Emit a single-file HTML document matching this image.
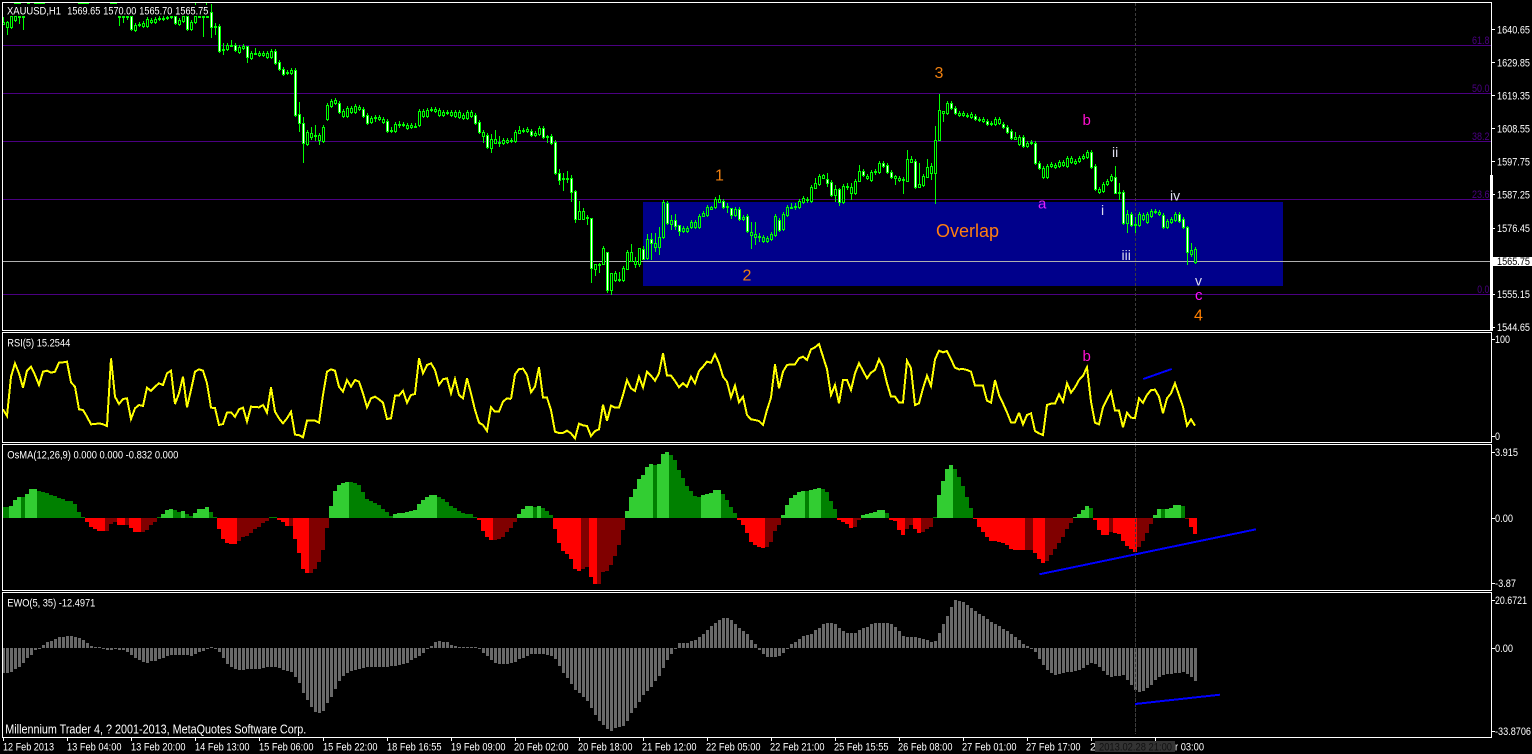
<!DOCTYPE html>
<html><head><meta charset="utf-8"><style>
html,body{margin:0;padding:0;background:#000;width:1532px;height:754px;overflow:hidden}
svg{display:block;position:absolute;left:0;top:0}
text{font-family:"Liberation Sans",sans-serif;font-size:11px;fill:#fff;white-space:pre}
.w{font-size:16px;fill:#f08010}
.m{font-size:15px;fill:#ff10d0}
.r{font-size:14px;fill:#dde}
.f{fill:#4b0082;font-size:11px}
</style></head><body>
<svg width="1532" height="754" viewBox="0 0 1532 754" xmlns="http://www.w3.org/2000/svg">
<rect width="1532" height="754" fill="#000"/>
<rect x="643" y="202" width="640" height="84" fill="#00008b"/>
<g fill="#4b0082">
<rect x="3" y="45" width="1488" height="1"/><rect x="3" y="93" width="1488" height="1"/><rect x="3" y="141" width="1488" height="1"/><rect x="3" y="199" width="1488" height="1"/><rect x="3" y="294" width="1488" height="1"/>
</g>
<rect x="3" y="261" width="1488" height="1" fill="#b0b0b0"/>
<path d="M1135.5 3V734" stroke="#3c3c3c" stroke-dasharray="3 2" fill="none"/>
<g id="c" shape-rendering="crispEdges"></g>
<rect x="5" y="3.500" width="204" height="12.500" fill="#000"/>
<g fill="#0f0"><rect x="14" y="3" width="7" height="1"/><rect x="27" y="3" width="3" height="1"/><rect x="34" y="3" width="11" height="1"/><rect x="78" y="3" width="11" height="1"/><rect x="110" y="3" width="7" height="1"/><rect x="195" y="3" width="1" height="2"/><rect x="206" y="3" width="1" height="2"/></g>
<g id="o" shape-rendering="crispEdges"></g>
<g id="e" shape-rendering="crispEdges" fill="#696969"></g>
<path d="M1135.5 444V734" stroke="#3c3c3c" stroke-dasharray="3 2" fill="none"/>

<g fill="none" stroke="#ff0" stroke-width="6" stroke-linejoin="miter" shape-rendering="crispEdges">
<polyline transform="translate(0,330) scale(.33333)" points="9,238 21,258 33,140 45,100 57,130 69,173 81,122 93,110 105,135 117,165 129,125 141,122 153,128 165,125 177,98 189,97 201,95 213,157 225,170 237,238 249,240 261,260 273,283 285,282 297,280 309,283 321,288 333,85 345,200 357,222 369,207 381,205 393,267 405,235 417,225 429,228 441,173 453,183 465,170 477,160 489,165 501,130 513,122 525,222 537,190 549,140 561,232 573,180 585,125 597,118 609,122 621,160 633,233 645,234 657,285 669,282 681,248 693,247 705,260 717,238 729,233 741,275 753,230 765,231 777,232 789,225 801,248 813,172 825,245 837,265 849,280 861,265 873,245 885,314 897,315 909,322 921,272 933,272 945,272 957,278 969,195 981,125 993,118 1005,122 1017,170 1029,185 1041,150 1053,170 1065,150 1077,155 1089,190 1101,232 1113,205 1125,200 1137,208 1149,218 1161,267 1173,265 1185,197 1197,197 1209,182 1221,218 1233,195 1245,192 1257,85 1269,130 1281,105 1293,100 1305,120 1317,165 1329,148 1341,145 1353,190 1365,147 1377,195 1389,205 1401,145 1413,190 1425,240 1437,278 1449,285 1461,303 1473,232 1485,245 1497,245 1509,215 1521,205 1533,207"/>
<polyline transform="translate(510,330) scale(.33333)" points="3,207 15,133 27,117 39,116 51,135 63,187 75,170 87,112 99,203 111,203 123,240 135,305 147,309 159,309 171,302 183,310 195,325 207,281 219,286 231,288 243,318 255,303 267,298 279,224 291,273 303,227 315,233 327,233 339,195 351,150 363,175 375,183 387,140 399,172 411,125 423,137 435,152 447,130 459,70 471,137 483,137 495,153 507,172 519,160 531,170 543,140 555,160 567,123 579,110 591,95 603,98 615,73 627,100 639,140 651,155 663,202 675,167 687,217 699,200 711,255 723,268 735,270 747,273 759,285 771,240 783,203 795,103 807,175 819,125 831,105 843,103 855,103 867,85 879,80 891,90 903,58 915,52 927,42 939,80 951,117 963,195 975,165 987,220 999,150 1011,150 1023,180 1035,130 1047,100 1059,122 1071,145 1083,128 1095,120 1107,88 1119,110 1131,160 1143,200 1155,200 1167,218 1179,218 1191,92 1203,115 1215,225 1227,220 1239,175 1251,137 1263,168 1275,88 1287,62 1299,67 1311,63 1323,88 1335,113 1347,118 1359,117 1371,120 1383,125 1395,167 1407,167 1419,167 1431,212 1443,218 1455,150 1467,195 1479,220 1491,247 1503,277 1515,277 1527,248"/>
<polyline transform="translate(1020,330) scale(.33333)" points="-3,248 9,283 21,255 33,250 45,303 57,310 69,315 81,225 93,221 105,221 117,193 129,215 141,160 153,188 165,172 177,150 189,137 201,112 213,215 225,278 237,283 249,232 261,208 273,185 285,242 297,242 309,292 321,248 333,263 345,264 357,205 369,218 381,195 393,180 405,179 417,200 429,250 441,205 453,190 465,160 477,195 489,230 501,287 513,268 525,287"/>
</g>
<g stroke="#00f" stroke-width="2" fill="none" shape-rendering="crispEdges">
<path d="M1143.300 379L1171.700 369"/><path d="M1039.300 574.300L1256 529.300"/><path d="M1135 704L1220 694.700"/>
</g>

<!-- panes -->
<g fill="none" stroke="#fff" shape-rendering="crispEdges">
<rect x="2.500" y="2.500" width="1489" height="328"/>
<rect x="2.500" y="332.500" width="1489" height="110"/>
<rect x="2.500" y="444.500" width="1489" height="146"/>
<rect x="2.500" y="592.500" width="1489" height="145"/>
</g>
<rect x="1490" y="175" width="3" height="156" fill="#fff"/>
<g fill="#fff">
<rect x="1492" y="29" width="3" height="1"/><rect x="1492" y="62" width="3" height="1"/><rect x="1492" y="95" width="3" height="1"/><rect x="1492" y="128" width="3" height="1"/><rect x="1492" y="161" width="3" height="1"/><rect x="1492" y="194" width="3" height="1"/><rect x="1492" y="228" width="3" height="1"/><rect x="1492" y="294" width="3" height="1"/><rect x="1492" y="327" width="3" height="1"/>
<rect x="1492" y="339" width="3" height="1"/><rect x="1492" y="436" width="3" height="1"/><rect x="1492" y="452" width="3" height="1"/><rect x="1492" y="518" width="3" height="1"/><rect x="1492" y="583" width="3" height="1"/><rect x="1492" y="600" width="3" height="1"/><rect x="1492" y="648" width="3" height="1"/><rect x="1492" y="731" width="3" height="1"/>
<rect x="3" y="738" width="1" height="3"/><rect x="67" y="738" width="1" height="3"/><rect x="131" y="738" width="1" height="3"/><rect x="195" y="738" width="1" height="3"/><rect x="259" y="738" width="1" height="3"/><rect x="323" y="738" width="1" height="3"/><rect x="387" y="738" width="1" height="3"/><rect x="451" y="738" width="1" height="3"/><rect x="515" y="738" width="1" height="3"/><rect x="579" y="738" width="1" height="3"/><rect x="643" y="738" width="1" height="3"/><rect x="707" y="738" width="1" height="3"/><rect x="771" y="738" width="1" height="3"/><rect x="835" y="738" width="1" height="3"/><rect x="899" y="738" width="1" height="3"/><rect x="963" y="738" width="1" height="3"/><rect x="1027" y="738" width="1" height="3"/><rect x="1091" y="738" width="1" height="3"/><rect x="1155" y="738" width="1" height="3"/>
</g>

<!-- fib labels -->
<text class="f" x="1472" y="44" textLength="17.500">61.8</text>
<text class="f" x="1472" y="92" textLength="17.500">50.0</text>
<text class="f" x="1472" y="140" textLength="17.500">38.2</text>
<text class="f" x="1472" y="198" textLength="17.500">23.6</text>
<text class="f" x="1477.300" y="293" textLength="12">0.0</text>

<!-- wave labels -->
<text class="w" x="715" y="180.500">1</text>
<text class="w" x="742.500" y="280.500">2</text>
<text class="w" x="934.500" y="78">3</text>
<text class="w" x="936" y="237" style="font-size:18px;fill:#ff7f10">Overlap</text>
<text class="w" x="1194" y="320.500" style="fill:#ff7f00">4</text>
<text class="m" x="1082.500" y="125">b</text>
<text class="m" x="1082.500" y="361">b</text>
<text class="m" x="1038" y="208.500" style="fill:#e020ff">a</text>
<text class="m" x="1195" y="300" style="fill:#ff10ff">c</text>
<text class="r" x="1112" y="157">ii</text>
<text class="r" x="1101" y="215">i</text>
<text class="r" x="1121.500" y="260">iii</text>
<text class="r" x="1170" y="200.500">iv</text>
<text class="r" x="1195" y="285.500">v</text>

<!-- left labels -->
<text x="7" y="14.500" textLength="54">XAUUSD,H1</text>
<text x="67.300" y="14.500" textLength="33">1569.65</text>
<text x="103.300" y="14.500" textLength="33">1570.00</text>
<text x="139.300" y="14.500" textLength="33">1565.70</text>
<text x="175.300" y="14.500" textLength="33">1565.75</text>
<text x="7.300" y="346.500" textLength="63">RSI(5) 15.2544</text>
<text x="7.300" y="458.500" textLength="171">OsMA(12,26,9) 0.000 0.000 -0.832 0.000</text>
<text x="7.300" y="606.500" textLength="88">EWO(5, 35) -12.4971</text>
<text x="5.300" y="733.500" textLength="301" style="font-size:12.500px">Millennium Trader 4, ? 2001-2013, MetaQuotes Software Corp.</text>

<!-- right axis -->
<g>
<text x="1497" y="33.500" textLength="33">1640.65</text>
<text x="1497" y="66.500" textLength="33">1629.85</text>
<text x="1497" y="99.500" textLength="33">1619.35</text>
<text x="1497" y="132.500" textLength="33">1608.55</text>
<text x="1497" y="165.500" textLength="33">1597.75</text>
<text x="1497" y="198.500" textLength="33">1587.25</text>
<text x="1497" y="232" textLength="33">1576.45</text>
<rect x="1492" y="257" width="40" height="9" fill="#fff"/>
<text x="1497" y="265" textLength="33" style="fill:#000">1565.75</text>
<text x="1497" y="298" textLength="33">1555.15</text>
<text x="1497" y="331" textLength="33">1544.65</text>
<text x="1495" y="343" textLength="15">100</text>
<text x="1495" y="440" textLength="5">0</text>
<text x="1495" y="456" textLength="23">3.915</text>
<text x="1495" y="522" textLength="18">0.00</text>
<text x="1495" y="587" textLength="21">-3.87</text>
<text x="1495" y="604" textLength="32">20.6721</text>
<text x="1495" y="652" textLength="18">0.00</text>
<text x="1495" y="735" textLength="36">-33.8706</text>
</g>

<!-- time axis -->
<g>
<text x="3" y="750.500" textLength="51">12 Feb 2013</text>
<text x="67" y="750.500" textLength="54.500">13 Feb 04:00</text>
<text x="131" y="750.500" textLength="54.500">13 Feb 20:00</text>
<text x="195" y="750.500" textLength="54.500">14 Feb 13:00</text>
<text x="259" y="750.500" textLength="54.500">15 Feb 06:00</text>
<text x="323" y="750.500" textLength="54.500">15 Feb 22:00</text>
<text x="387" y="750.500" textLength="54.500">18 Feb 16:55</text>
<text x="451" y="750.500" textLength="54.500">19 Feb 09:00</text>
<text x="514" y="750.500" textLength="54.500">20 Feb 02:00</text>
<text x="578" y="750.500" textLength="54.500">20 Feb 18:00</text>
<text x="642" y="750.500" textLength="54.500">21 Feb 12:00</text>
<text x="706" y="750.500" textLength="54.500">22 Feb 05:00</text>
<text x="770" y="750.500" textLength="54.500">22 Feb 21:00</text>
<text x="834" y="750.500" textLength="54.500">25 Feb 15:55</text>
<text x="898" y="750.500" textLength="54.500">26 Feb 08:00</text>
<text x="962" y="750.500" textLength="54.500">27 Feb 01:00</text>
<text x="1026" y="750.500" textLength="54.500">27 Feb 17:00</text>
<text x="1090" y="750.500">2</text>
<rect x="1095" y="741" width="80" height="11" fill="#333"/>
<text x="1099" y="750.500" textLength="73" style="fill:#111">2013.02.28 21:00</text>
<text x="1175" y="750.500" textLength="29">r 03:00</text>
</g>
</svg>
<script>
document.querySelectorAll('text[textLength]').forEach(function(t){t.setAttribute('lengthAdjust','spacingAndGlyphs')});
var C={0:"66,72,,50,75 65,80,,62,105 48,82 48,60 48,50,,48,72 48,50,,48,90",
29:"48,50,,48,78 48,50,,48,68 48,50,,48,60 48,88,w 76,90 72,76 70,77 58,78 60,66 58,65 55,58 54,57 50,55 48,50 48,70,w 60,72 48,62 48,86,w 66,88 48,66 48,50,,48,52 48,50,,48,110 48,50,,48,52 36,82,w,12,115 78,80,,70,105 78,152,w 148,151,,130,165 135,148 136,139,,120,141 136,150,w 142,156 139,143,,132,150 138,172,w,138,190 160,175 159,162,,145,166 159,165 160,165 160,172 152,170 154,188,w 186,208,w 208,222,w 217,220 210,218 210,344,w 343,370,w,306,395 370,428,w,350,488 396,432 400,410,,380,420 405,408,,375,422 405,420,,400,434 382,422 315,356 304,317 301,308 309,336,w 333,347 324,348 324,336 318,336 321,326 328,348,w 345,368,w 354,366 351,354,,345,365 351,358 357,365 363,392,w 389,392,,380,398 372,392 371,374,,362,385 371,374 375,383 376,380 378,381,,370,385 334,376 333,347 330,347 328,331 328,334 330,345 337,344 337,340 337,346 336,347 336,350 345,354 337,353 337,349 346,370,w 367,397,w 397,407,,390,428 406,442,w 418,443,,402,460 418,430,,390,432 426,429,,408,440 420,430 421,425",
127:"420,424 396,424 390,398,,378,400 389,392 388,392 394,405,w 400,404 384,402 385,410,w 408,411,,405,428 408,428,w 427,520,w 520,540,w,507,555 534,537,,520,572 534,537,,514,550 535,575,w,525,605 573,656,w,570,668 633,658,,603,660 633,656,,625,660 650,654,,645,674 655,805,w,655,850 793,806,,793,828 792,795,,790,818 745,793,,738,796 757,870,w,755,878 820,870,,820,884 820,840,,812,845 837,840,,815,846 805,840 757,806,,750,808 755,782,,732,784 782,792,,770,805 745,792,,745,802 747,777,w,738,780 718,775,,703,780 718,730,w,700,780 730,740,,700,755 710,742,,680,765 607,710 610,670,w 660,672,,645,690 660,678,w,642,690 676,694,w,676,708 683,692 683,692 666,682 666,680 648,680 640,648,,632,650 622,645 622,626,,618,628 596,622 596,605,,585,608 603,620,w 617,621,,610,640 625,645,w,625,658 628,646 628,656,w 650,657 648,692,w 695,706,,665,746 702,710,,667,735 708,711,,700,725 712,724 714,724 703,716 649,704 659,690,w 643,688 622,644 620,624,,610,628 618,622,,610,630 604,620 595,605 596,599,,590,610 562,602 550,564,,535,566 527,551 526,535,,522,538 538,550,w,520,560 546,585,w 568,584,,555,605 568,606,w,565,618 558,606 557,561,,550,570 560,578,,548,600 542,578 512,542,,495,544 512,526,w 528,533 517,540 514,517,,508,525 488,515 490,497,w 494,515,w 515,530,w 529,533,,525,555 533,540 537,540,,530,582 478,542,,450,544 478,485,,468,490 484,562,w 553,560,,490,562 528,555 500,530,,478,532 498,518,,490,540 420,518,,378,613 330,420,,282,422 332,340,,332,365 310,340 310,325,w 325,340,w 340,344 338,345 344,348 342,350 348,358,w 357,360 358,362 362,372,w 369,373 358,372 358,370 372,380,w 380,395,w 392,413,w 412,416,,395,420 410,432",
255:"410,437,w 430,437 427,430 430,490,w 490,505,w 505,530 497,530 492,497 495,502 487,497 487,496 475,497 475,487 483,488 475,482 468,475 457,470 455,500,w 497,566,w 566,575 552,572 543,553 528,540 532,578,w,498,580 575,578,,550,600 576,670,w 642,670,,630,700 642,675,w 673,676,,650,700 643,675 645,658 643,665 633,647 632,635 635,642 645,682,w 662,682 657,665 643,660 643,662,w 658,680,w 680,757,w,678,795 751,761,,730,772 747,785"};
var s='';
for(var k in C){C[k].split(' ').forEach(function(t,n){
var a=t.split(','),i=+k+n,x=3+4*i,T=+a[0],B=+a[1],w=a[2]=='w';
var h=a[3]?+a[3]:T-6,l=a[4]?+a[4]:B+6;
var yt=Math.round(T/3),yb=Math.round(B/3),yh=Math.round(h/3),yl=Math.round(l/3);
if(yb<=yt)yb=yt+1;
s+='<rect x="'+x+'" y="'+yh+'" width="1" height="'+Math.max(1,yl-yh)+'" fill="#0f0"/>';
s+='<rect x="'+(x-.5)+'" y="'+(yt+.5)+'" width="2" height="'+(yb-yt)+'" stroke="#0f0" fill="'+(w?'#fff':(yb-yt<2?'#0f0':'#00000000'))+'"/>';
if(!w&&yb-yt>=2){s+='<rect x="'+x+'" y="'+(yt+1)+'" width="1" height="'+(yb-yt-1)+'" fill="'+((i>=160&&yt>=202)?'#00008b':'#000')+'"/>';}
});}
document.getElementById('c').innerHTML=s;

var O={0:"532D 532D 528L 510L 502L 502D 492L 478L 478L 483D 486D 490D 494D 498D 503D 507D 512D 514D 522D 546D 560D 576R 592R 598R 603R 603R 603K 582K 576K 585R 585R 585K 594R 606R 606R 606K 600K 585K 576K 560D 552L 540L 537L 540D 545D 543L 552D 558D 548L 537L 537L 530L 546D 560D 597R 627R 639R 642R 642R 634K 621K 617K 610K 598K 590K 578K 572K 560D 561D 570R 576R 587R 587K 627R 668R 716R 729R 729K 716K 696K 660K 594K 528L 483L 465L 458L 456L 456D 460D 465D 487D 506D 513D 519D 525D 537D 546D 558D 553L 550L 548L 546L 543L 540L 523L 510L 500L 495L 495L 502D 506D 516D 528D 533D 544D 548D 552D 553D 560D 570R 602R 621R 630R 630K 627K 622K 606K",
127:"594K 576K 552L 537L 528L 528L 532D 528L 534D 543D 555D 597R 639R 663R 672R 687R 716R 723R 718K 712K 741R 762R 762K 726K 723K 705K 678K 645K 600K 543L 501L 477L 447L 435L 411L 402L 405D 402L 372L 366L 375D 390D 420D 444D 468D 483D 498D 501D 495L 492L 489L 480L 480L 492D 510D 531D 549D 570R 585R 609R 636R 645R 651R 654R 651K 636K 603K 585K 555L 525L 504L 495L 486L 483L 483D 480L 477L 474L 477D 486D 513D 537D 570R 576R 582R 594R 591K 570K 555L 552L 549L 546L 540L 540L 549D 570R 573R 600R 615R 597K 585K 597R 609R 606K 597K 591K 561D 495L 453L 417L 405L 417D 441D 468D 501D 534D 567R 591R 606R 621R 633R 634R 636R 639R 645R 657R 660R 660R",
255:"660R 660K 660K 669R 687R 699R 693K 675K 658K 640K 621K 597K 580K 561L 552L 540L 528L 534D 570R 600R 615R 615R 606K 609R 612R 633R 648R 657R 666R 651K 633K 609K 582K 555L 537L 537D 537L 534L 525L 525L 528D 567K 591R 612R"};
var cl={L:'#32cd32',D:'#008000',R:'#f00',K:'#800000'};s='';
for(var k in O){O[k].split(' ').forEach(function(t,n){
var i=+k+n,x=1+4*i,Y=parseInt(t),c=t.slice(-1),y=330+Math.round(Y/3),w=4;
if(i==0){x=3;w=2}
var a=Math.min(y,518),b=Math.max(y,518);
s+='<rect x="'+x+'" y="'+a+'" width="'+w+'" height="'+Math.max(1,b-a)+'" fill="'+cl[c]+'"/>';
});}
document.getElementById('o').innerHTML=s;

var E={0:"250 250 245 238 232 220 205 195 180 177 165 155 152 148 142 140 139 138 140 143 150 158 167 170 172 178 181 179 178 180 181 185 194 205 210 216 218 214 212 208 204 197 195 194 194 194 195 197 193 186 183 175 171 178 185 204 222 230 237 239 239 237 238 238 238 235 232 231 232 235 241 243 247 260 280 308 331 352 366 369 362 340 320 296 272 258 249 243 240 236 233 232 231 231 231 231 230 228 228 225 222 218 210 204 198 188 178 167 157 153 155 157 164 167 170 172 172 172 172 178 188 198 210 218 221 221 221",
127:"218 215 207 203 197 192 192 192 192 195 198 207 228 250 265 282 300 310 320 333 354 375 392 405 418 423 414 410 408 394 369 354 335 315 304 291 272 258 234 210 192 176 158 158 158 152 150 141 132 120 108 98 90 84 84 91 103 115 124 133 149 162 181 192 201 201 201 198 190 176 163 155 147 139 135 131 120 114 103 99 99 103 114 124 129 130 129 120 115 110 103 99 99 99 99 103 110 123 138 141 141 141 144 146 150 155 152 129 103 78 52 30 33 36 45 54 63 72 78 87 96 102 108 117 124 132 141 150",
255:"162 168 174 186 207 225 240 250 254 252 249 246 246 244 240 234 225 220 222 232 244 256 261 258 258 255 270 285 300 306 303 294 285 269 261 255 252 252 249 248 247 252 261 273"};
s='';
for(var k in E){E[k].split(' ').forEach(function(t,n){
var i=+k+n,x=2+4*i,y=590+Math.round(+t/3);
var a=Math.min(y,648),b=Math.max(y,648);
s+='<rect x="'+x+'" y="'+a+'" width="3" height="'+Math.max(1,b-a)+'"/>';
});}
document.getElementById('e').innerHTML=s;
</script>
</body></html>
